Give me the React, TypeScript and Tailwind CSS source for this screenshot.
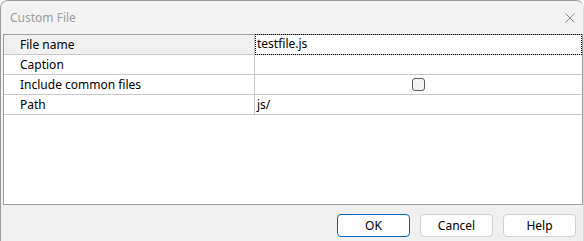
import React from "react";

const rows = [
  { label: "File name", value: "testfile.js", selected: true },
  { label: "Caption", value: "" },
  { label: "Include common files", checkbox: true },
  { label: "Path", value: "js/" },
];

export default function App() {
  return (
    <div
      className="w-[584px] h-[241px] bg-white overflow-hidden"
      style={{ fontFamily: '"Noto Sans", "Open Sans", sans-serif' }}
    >
      <div className="w-[584px] h-[242px] flex flex-col bg-[#f0f0f0] border border-[#9a9a9a] border-r-[#d8d8d8] rounded-t-[8px] overflow-hidden">
        <div className="h-[33px] shrink-0 bg-[#f3f3f3] flex items-center justify-between pl-[9px] pr-[6px]">
          <span className="text-[12px] text-[#9b9b9b] leading-none">Custom File</span>
          <svg width="12" height="12" viewBox="0 0 12 12" className="mr-[1px]">
            <path d="M1.5 1.5 L10.5 10.5 M10.5 1.5 L1.5 10.5" stroke="#8a8a8a" strokeWidth="1" fill="none" />
          </svg>
        </div>
        <div className="ml-[2px] h-[171px] shrink-0 bg-white border border-[#a0a0a0] flex flex-col">
          {rows.map((r, i) => (
            <div key={i} className="h-[20px] shrink-0 flex border-b border-[#c8c8c8] text-[12px] text-black">
              <div
                className={
                  "w-[251px] shrink-0 border-r border-[#c8c8c8] pl-[16px] flex items-center " +
                  (r.selected ? "bg-[#f0f0f0]" : "")
                }
              >
                {r.label}
              </div>
              <div className="flex-1 flex items-center">
                {r.selected ? (
                  <div className="w-full h-[21px] -mt-[1px] border border-dotted border-black flex items-center pl-[1px]">
                    {r.value}
                  </div>
                ) : r.checkbox ? (
                  <div className="w-full flex justify-center">
                    <div className="w-[13px] h-[13px] rounded-[3px] border border-[#5c5c5c] bg-[#f3f3f3]" />
                  </div>
                ) : (
                  <span className="pl-[2px]">{r.value}</span>
                )}
              </div>
            </div>
          ))}
        </div>
        <div className="flex justify-end gap-[10px] pr-[7px] pt-[9px]">
          <button className="w-[73px] h-[23px] rounded-[4px] border border-[#0067c0] bg-[#fdfdfd] text-[12px] text-black flex items-center justify-center">
            OK
          </button>
          <button className="w-[73px] h-[23px] rounded-[4px] border border-[#d0d0d0] bg-[#fdfdfd] text-[12px] text-black flex items-center justify-center">
            Cancel
          </button>
          <button className="w-[73px] h-[23px] rounded-[4px] border border-[#d0d0d0] bg-[#fdfdfd] text-[12px] text-black flex items-center justify-center">
            Help
          </button>
        </div>
      </div>
    </div>
  );
}
